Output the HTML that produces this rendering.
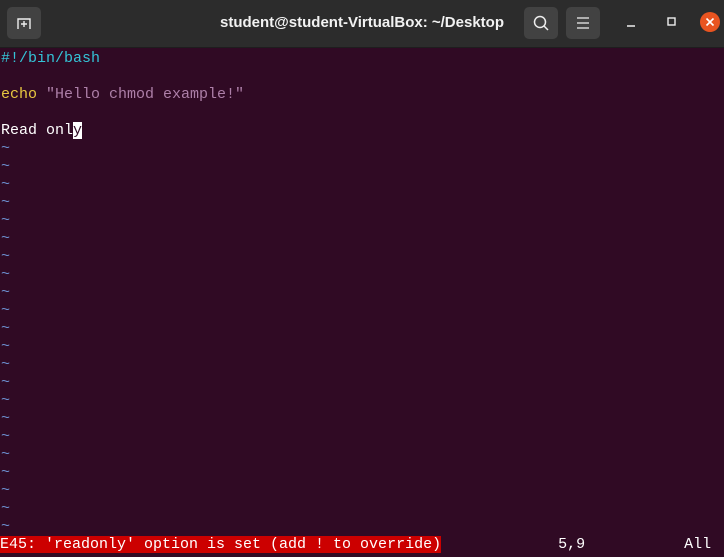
<!DOCTYPE html><html><head><style>
body{margin:0;width:724px;height:557px;background:#300a24;overflow:hidden;font-family:"Liberation Mono",monospace;}
.tb{position:absolute;left:0;top:0;width:724px;height:47px;background:#2c2c2c;border-bottom:1px solid #1e1e1e}
.btn{position:absolute;top:7px;width:34px;height:32px;background:#424242;border-radius:5px}
.title{position:absolute;left:0;right:0;top:14px;text-align:center;color:#f2f2f2;font:bold 15px "Liberation Sans",sans-serif}
.t{position:absolute;left:1px;top:50px;font-size:15px;line-height:18px;color:#fff;white-space:pre}
.til{color:#6c8fd0}
.st{position:absolute;left:0;top:536px;width:724px;height:18px;font-size:15px;line-height:18px;color:#fff;white-space:pre}
</style></head><body>
<div class="tb">
<div class="btn" style="left:7px"><svg width="34" height="32"><path d="M11 22V12h12v10M17 14v6M14 17h6" stroke="#eee" stroke-width="1.4" fill="none"/></svg></div>
<div class="title">student@student-VirtualBox: ~/Desktop</div>
<div class="btn" style="left:524px"><svg width="34" height="32"><circle cx="16" cy="15" r="5.5" stroke="#eee" stroke-width="1.5" fill="none"/><path d="M20 19l4 4" stroke="#eee" stroke-width="1.5"/></svg></div>
<div class="btn" style="left:566px"><svg width="34" height="32"><path d="M11 11h12M11 16h12M11 21h12" stroke="#eee" stroke-width="1.3"/></svg></div>
<svg style="position:absolute;left:620px;top:10px" width="104" height="26"><path d="M7 16h8" stroke="#eee" stroke-width="1.5"/><rect x="48" y="8" width="7" height="7" stroke="#eee" stroke-width="1.4" fill="none"/><circle cx="90" cy="12" r="10" fill="#e95420"/><path d="M86.5 8.5l7 7M93.5 8.5l-7 7" stroke="#fff" stroke-width="1.6"/></svg>
</div>
<div class="t"><span style="color:#34c3d6">#!/bin/bash</span>

<span style="color:#e8c840">echo</span> <span style="color:#ad7fa8">"Hello chmod example!"</span>

Read onl<span style="background:#fff;color:#300a24">y</span>
<span class="til">~
~
~
~
~
~
~
~
~
~
~
~
~
~
~
~
~
~
~
~
~
~</span></div>
<div class="st"><span style="background:#cc0000">E45: 'readonly' option is set (add ! to override)</span>             5,9           All</div>
</body></html>
